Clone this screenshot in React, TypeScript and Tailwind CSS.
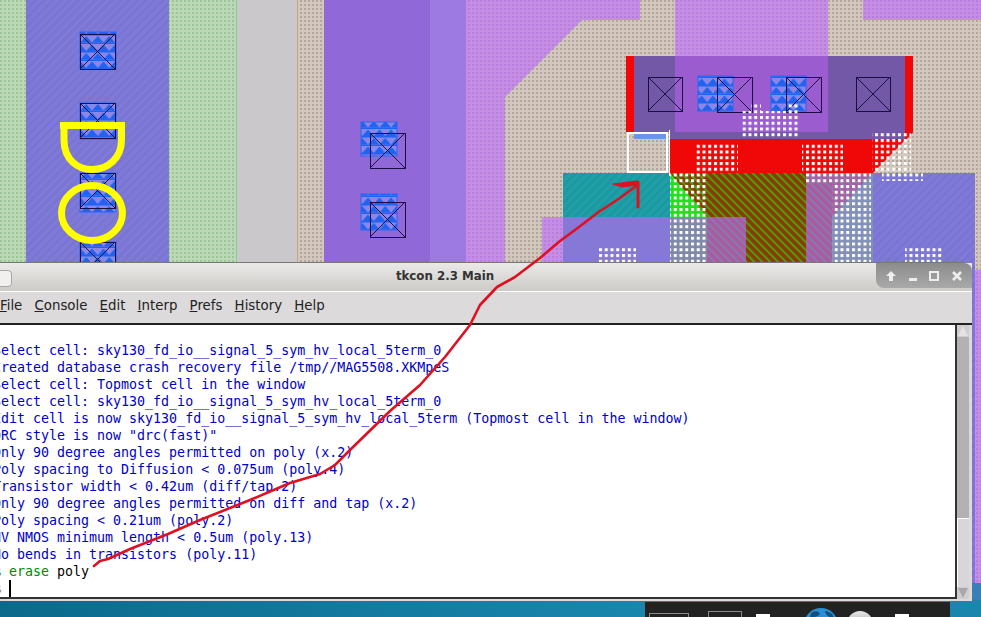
const consoleLines = [
  "Select cell: sky130_fd_io__signal_5_sym_hv_local_5term_0",
  "Created database crash recovery file /tmp//MAG5508.XKMpeS",
  "Select cell: Topmost cell in the window",
  "Select cell: sky130_fd_io__signal_5_sym_hv_local_5term_0",
  "Edit cell is now sky130_fd_io__signal_5_sym_hv_local_5term (Topmost cell in the window)",
  'DRC style is now "drc(fast)"',
  "Only 90 degree angles permitted on poly (x.2)",
  "Poly spacing to Diffusion < 0.075um (poly.4)",
  "Transistor width < 0.42um (diff/tap.2)",
  "Only 90 degree angles permitted on diff and tap (x.2)",
  "Poly spacing < 0.21um (poly.2)",
  "HV NMOS minimum length < 0.5um (poly.13)",
  "No bends in transistors (poly.11)",
];

const menus = ["File", "Console", "Edit", "Interp", "Prefs", "History", "Help"];

// blue m1 squares, then black contact squares on top
const blues = [
  [80, 32, 36, 37], [80, 103, 36, 36], [80, 173, 36, 39], [80, 242, 36, 30],
  [361, 122, 36, 34], [361, 194, 36, 36], [698, 76, 35, 35], [771, 76, 35, 35],
];
const contacts = [
  [80, 34, 35], [80, 103, 35], [80, 173, 35], [80, 242, 35],
  [370, 133, 35], [370, 202, 35],
  [648, 77, 34], [717, 77, 35], [786, 77, 35], [856, 77, 34],
];
const whiteDots = [
  [741, 111, 58, 28], [751, 103, 10, 8], [786, 103, 14, 8],
  [696, 143, 42, 30], [802, 143, 41, 30], [872, 132, 39, 41],
  [670, 173, 38, 10], [670, 183, 37, 79], [806, 173, 65, 10], [832, 183, 39, 79],
  [882, 173, 41, 8], [598, 247, 38, 15], [905, 247, 38, 15],
];

function Layout() {
  return (
    <svg width="981" height="583" className="block shrink-0">
      <defs>
        <pattern id="green" width="4" height="4" patternUnits="userSpaceOnUse">
          <rect width="4" height="4" fill="#bcd8b6" />
          <rect width="2" height="2" fill="#9cc69a" />
        </pattern>
        <pattern id="tan" width="4" height="4" patternUnits="userSpaceOnUse">
          <rect width="4" height="4" fill="#d3c8c0" />
          <rect width="2" height="2" fill="#b3a698" />
        </pattern>
        <pattern id="pink" width="4" height="4" patternUnits="userSpaceOnUse">
          <rect width="4" height="4" fill="#c58ee2" />
          <rect width="2" height="2" fill="#b67ede" />
        </pattern>
        <pattern id="blue" width="6" height="6" patternUnits="userSpaceOnUse" patternTransform="rotate(45)">
          <rect width="6" height="6" fill="#7f79d8" />
          <rect width="3" height="6" fill="#7a74d2" />
        </pattern>
        <pattern id="teal" width="6" height="6" patternUnits="userSpaceOnUse" patternTransform="rotate(45)">
          <rect width="6" height="6" fill="#20a0a6" />
          <rect width="3" height="6" fill="#1c98a2" />
        </pattern>
        <pattern id="hatch" width="5.6" height="6" patternUnits="userSpaceOnUse" patternTransform="rotate(-45)">
          <rect width="5.6" height="6" fill="#8c3a04" />
          <rect width="2" height="6" fill="#4aa00c" />
        </pattern>
        <pattern id="pinkHatch" width="5.6" height="6" patternUnits="userSpaceOnUse" patternTransform="rotate(-45)">
          <rect width="5.6" height="6" fill="#a85c9e" />
          <rect width="2" height="6" fill="#8c78b0" />
        </pattern>
        <pattern id="m1" width="11.5" height="17" patternUnits="userSpaceOnUse">
          <rect width="11.5" height="17" fill="#8a86ea" />
          <path d="M0 8.5 L5.75 2 L11.5 8.5 Z" fill="#1f63f0" />
          <path d="M-5.75 17 L0 10.5 L5.75 17 Z M5.75 17 L11.5 10.5 L17.25 17 Z" fill="#1f63f0" />
          <rect y="0" width="11.5" height="1.5" fill="#1f63f0" />
          <rect y="8.5" width="11.5" height="1.5" fill="#1f63f0" />
        </pattern>
        <pattern id="white" x="1" y="1" width="5.75" height="5.75" patternUnits="userSpaceOnUse">
          <rect width="3" height="3" fill="#ffffff" />
        </pattern>
      </defs>

      {/* vertical bands */}
      <rect width="981" height="583" fill="url(#pink)" />
      <rect width="26" height="583" fill="url(#green)" />
      <rect x="26" width="143" height="583" fill="url(#blue)" />
      <rect x="169" width="68" height="583" fill="url(#green)" />
      <rect x="236" width="1" height="583" fill="#7fcf9a" />
      <rect x="237" width="60" height="583" fill="#cbc8cc" />
      <rect x="297" width="27" height="583" fill="url(#tan)" />
      <rect x="297" width="1" height="583" fill="#c9a27e" />
      <rect x="324" width="106" height="583" fill="#9068d8" />
      <rect x="430" width="36" height="583" fill="#9c7ae2" />

      {/* diffusion area */}
      <path d="M505 270 V97 L582 20 H640 V0 H675 V20 H863 V20 H981 V270 Z" fill="url(#tan)" />
      <rect x="828" width="35" height="21" fill="url(#tan)" />
      <rect x="675" width="153" height="56" fill="url(#pink)" />
      <rect x="832" y="173" width="143" height="410" fill="url(#blue)" />

      {/* gate */}
      <path d="M626 56 H913 V132 L873 173 H670 V132 H626 Z" fill="#f00808" />
      <rect x="634" y="56" width="271" height="83" fill="#7358a8" />
      <path d="M905 132 L913 132 L905 141 Z" fill="#f00808" />
      <rect x="675" y="56" width="153" height="76" fill="#9a5ccf" />
      <path d="M634 132 H670 V173 H627 V132 Z" fill="url(#tan)" />

      {/* lower transistor */}
      <rect x="542" y="217" width="21" height="53" fill="url(#pink)" />
      <rect x="563" y="173" width="107" height="44" fill="url(#teal)" />
      <rect x="563" y="217" width="107" height="53" fill="#8578d6" />
      <rect x="670" y="173" width="37" height="44" fill="#1ee01e" />
      <path d="M670 173 H707 V217 Z" fill="url(#hatch)" />
      <rect x="670" y="217" width="37" height="53" fill="#7f88a8" />
      <rect x="707" y="173" width="99" height="97" fill="url(#hatch)" />
      <rect x="707" y="217" width="39" height="53" fill="url(#pinkHatch)" />
      <rect x="806" y="173" width="26" height="97" fill="url(#pinkHatch)" />
      <path d="M832 173 H873 L832 217 Z" fill="url(#pinkHatch)" />
      <path d="M832 217 L873 173 V270 H832 Z" fill="#8290b8" />

      {blues.map(([x, y, w, h]) => (
        <rect key={`${x}-${y}`} x={x} y={y} width={w} height={h} fill="url(#m1)" stroke="#2a66f0" strokeWidth="1" />
      ))}
      {contacts.map(([x, y, s]) => (
        <g key={`${x}-${y}`} stroke="#1a0f45" strokeWidth="1" fill="none">
          <rect x={x + 0.5} y={y + 0.5} width={s} height={s} />
          <path d={`M${x} ${y} L${x + s} ${y + s} M${x + s} ${y} L${x} ${y + s}`} />
        </g>
      ))}
      {whiteDots.map(([x, y, w, h]) => (
        <rect key={`${x}-${y}`} x={x} y={y} width={w} height={h} fill="url(#white)" />
      ))}

      {/* selection box */}
      <rect x="634" y="134" width="32" height="5" fill="#6a96e8" />
      <rect x="628" y="133" width="39" height="39" fill="none" stroke="#ffffff" strokeWidth="2" />
      <rect x="669" y="130" width="1" height="46" fill="#ffffff" />

      {/* label */}
      <g fill="none" stroke="#ffff00" strokeWidth="7">
        <path d="M60 125.5 H125 M64 126 V140 C64 160 78 169.5 92 169.5 C108 169.5 121.5 158 121.5 140 V126" />
        <ellipse cx="92" cy="213" rx="30.5" ry="27.5" />
      </g>
    </svg>
  );
}

function TitleButtons() {
  return (
    <div className="flex h-[25px] w-[96px] items-center justify-between rounded-bl-lg rounded-tr-lg bg-gradient-to-b from-[#8c8c8c] to-[#a9a9a9] pl-[9px] pr-[9px]">
      <svg width="12" height="12" viewBox="0 0 12 12" fill="#eeeeee">
        <path d="M6 1 L11 6 H8 V11 H4 V6 H1 Z" />
      </svg>
      <svg width="10" height="12" viewBox="0 0 10 12" fill="#eeeeee">
        <rect x="1" y="8" width="8" height="3" />
      </svg>
      <svg width="12" height="12" viewBox="0 0 12 12" fill="none" stroke="#eeeeee" strokeWidth="2">
        <rect x="2" y="2" width="8" height="8" />
      </svg>
      <svg width="12" height="12" viewBox="0 0 12 12" fill="none" stroke="#eeeeee" strokeWidth="2.6">
        <path d="M2 2 L10 10 M10 2 L2 10" />
      </svg>
    </div>
  );
}

function Scrollbar() {
  return (
    <div className="flex w-[12px] shrink-0 flex-col bg-[#b3b1b3]">
      <svg width="12" height="12" viewBox="0 0 12 12" className="shrink-0">
        <rect width="12" height="12" fill="#cfcdcf" />
        <path d="M6 1 L11 11 H1 Z" fill="#e4e2e4" />
      </svg>
      <div className="flex-1" />
      <div className="h-[69px] border-t border-l border-white bg-[#d8d6da]" />
      <svg width="12" height="12" viewBox="0 0 12 12" className="shrink-0">
        <rect width="12" height="12" fill="#cfcdcf" />
        <path d="M6 11 L11 1 H1 Z" fill="#a9a7a9" />
      </svg>
    </div>
  );
}

function TkconWindow() {
  return (
    <div className="absolute left-[-10px] top-[262px] flex h-[339px] w-[982px] flex-col rounded-t-lg border-t border-[#777777] bg-[#dcdadb]">
      {/* title bar */}
      <div className="flex h-[28px] shrink-0 items-start bg-gradient-to-b from-[#eceae8] to-[#cdcbc8]">
        <div className="mt-[7px] ml-[4px] h-[17px] w-[18px] rounded-sm border border-[#a9a7a4] bg-[#f2f0ee]" />
        <div className="flex h-full flex-1 items-center justify-center pl-[2px] font-['DejaVu_Sans',sans-serif] text-[11.8px] font-bold text-[#333333]">
          tkcon 2.3 Main
        </div>
        <TitleButtons />
      </div>

      {/* menu bar */}
      <div className="flex h-[32px] shrink-0 items-center gap-[12.2px] border-t border-white pl-[10px] pb-[3px] font-['DejaVu_Sans',sans-serif] text-[13.33px] text-[#222222]">
        {menus.map((name) => (
          <span key={name}>
            <span className="underline">{name[0]}</span>
            {name.slice(1)}
          </span>
        ))}
      </div>

      {/* console */}
      <div className="flex min-h-0 flex-1 border-t-2 border-[#222222] pr-[3px] pb-[2px]">
        <div className="flex-1 overflow-hidden border-r-2 border-b-2 border-[#333333] bg-white pt-[17px] pl-[3px] font-['DejaVu_Sans_Mono',monospace] text-[13.3px] leading-[17px] whitespace-pre text-[#0000c8]">
          {consoleLines.map((line) => (
            <div key={line}>{line}</div>
          ))}
          <div>
            <span className="text-[#8a5a20]">% </span>
            <span className="text-[#008a00]">erase</span>
            <span className="text-black"> poly</span>
          </div>
          <div className="flex items-center text-[#8a5a20]">
            <span>% </span>
            <span className="h-[17px] w-[2px] bg-black" />
          </div>
        </div>
        <Scrollbar />
      </div>
    </div>
  );
}

function Taskbar() {
  return (
    <div className="mt-auto flex h-[17px] shrink-0 overflow-hidden bg-[#1a86ad]">
      <div className="w-[645px] bg-gradient-to-r from-[#0b6a8c] to-[#1a86ad]" />
      <div className="mt-[2px] flex w-[305px] items-start bg-[#222222]">
        <div className="mt-[11px] ml-[4px] h-[20px] w-[40px] border border-[#8a8a8a]" />
        <div className="mt-[9px] ml-[19px] h-[20px] w-[34px] border border-[#8a8a8a]" />
        <div className="mt-[12px] ml-[14px] h-[10px] w-[14px] bg-white" />
        <svg width="34" height="34" viewBox="0 0 34 34" className="mt-[6px] ml-[34px] shrink-0">
          <circle cx="17" cy="17" r="17" fill="#2a8fd6" />
          <path d="M7 5 C11 2 15 3 16 6 C13 9 9 10 6 9 Z M21 3 C25 3 29 6 30 10 C26 10 22 8 21 3 Z" fill="#12507f" />
        </svg>
        <div className="mt-[9px] ml-[9px] h-[26px] w-[26px] rounded-full bg-gradient-to-b from-[#e6e6e6] to-[#888888]" />
        <div className="mt-[12px] ml-[22px] h-[10px] w-[14px] bg-white" />
      </div>
    </div>
  );
}

export default function App() {
  return (
    <div className="relative flex h-[617px] w-[981px] flex-col overflow-hidden bg-[#3a80b8]">
      <Layout />
      <TkconWindow />
      <Taskbar />

      {/* hand drawn arrow over everything */}
      <svg width="981" height="617" className="pointer-events-none absolute top-0 left-0" fill="none" stroke="#e01020" strokeLinecap="round" strokeLinejoin="round">
        <path
          strokeWidth="2.6"
          d="M94 566 L100 561 L108 559 L130 549 L168 534 L200 520 L250 500 L290 483 L320 474 L335 465 L350 450 L390 411 L420 385 L445 357 L470 325 L480 305 L497 287 L515 277 L540 258 L560 241 L575 230 L600 211 L620 198 L636 186"
        />
        <path strokeWidth="3" d="M638 182 L638 207" />
        <path fill="#e01020" strokeWidth="1" d="M613 184 L637 181 L637 185 L622 187 Z" />
      </svg>
    </div>
  );
}
